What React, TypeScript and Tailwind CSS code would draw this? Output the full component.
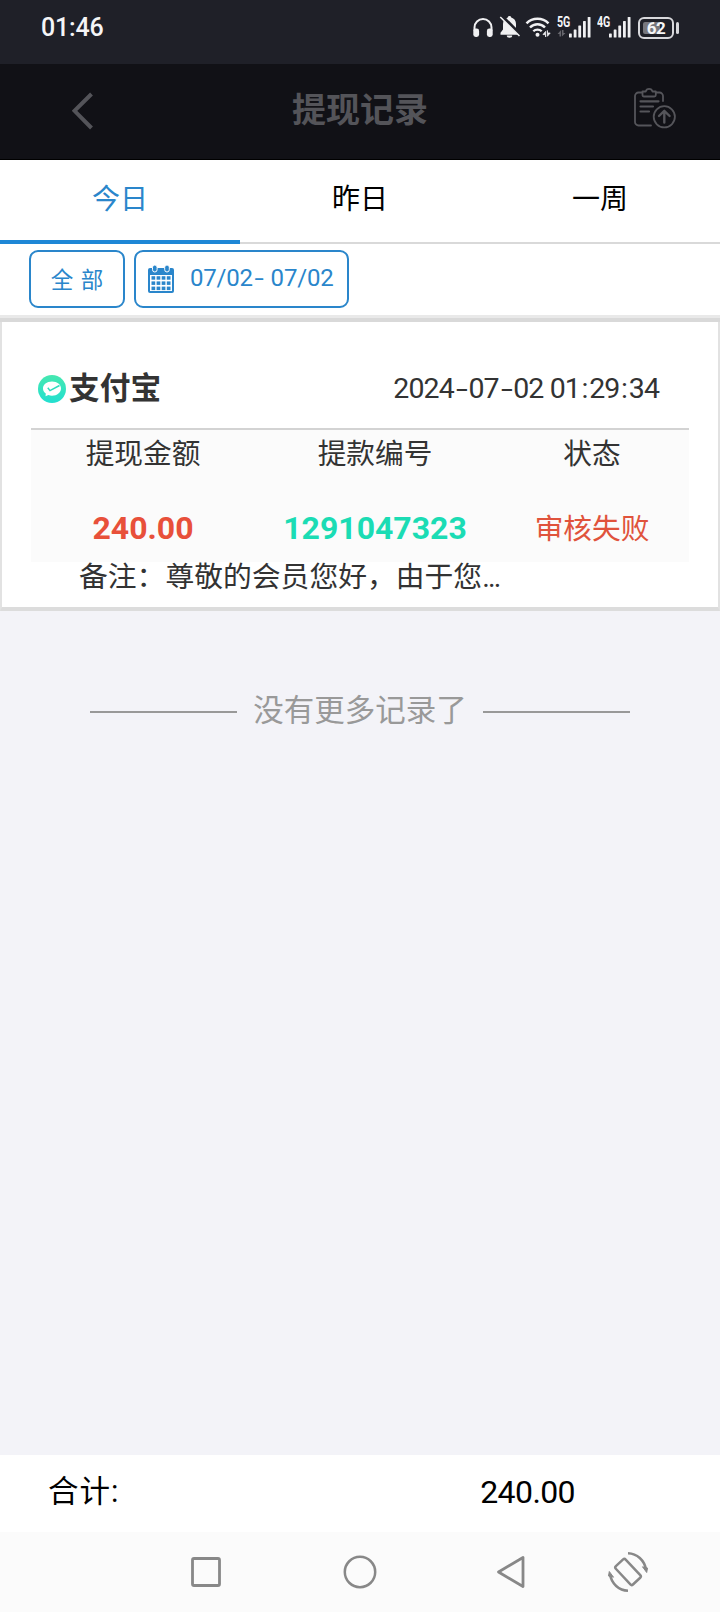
import React from "react";
import { twMerge } from "tailwind-merge";

interface IconProps {
    className?: string;
}

// Signal bars used for both SIM cards
const SignalBars: React.FC<IconProps> = ({ className }) => (
    <svg className={className} width="22" height="21" viewBox="0 0 22 21" fill="#f0f0f2">
        <rect x="0" y="16.5" width="2.8" height="4" rx="0.6" />
        <rect x="4.7" y="12.5" width="2.8" height="8" rx="0.6" />
        <rect x="9.3" y="8.5" width="2.8" height="12" rx="0.6" />
        <rect x="14" y="4" width="2.8" height="16.5" rx="0.6" />
        <rect x="18.7" y="0" width="2.8" height="20.5" rx="0.6" />
    </svg>
);

const StatusBar = () => (
    <div className="flex h-16 items-start justify-between bg-[#1f2028] pl-[41px] pr-[41px] text-[#f5f5f7]">
        <span className="mt-3 text-[25px] leading-8 font-medium tracking-[-0.2px]">01:46</span>
        <div className="mt-[17px] flex h-[23px] items-start">
            {/* Headphones */}
            <svg width="20" height="22" viewBox="0 0 20 22" fill="none">
                <path d="M1.5 14V10.5a8.5 8.5 0 0 1 17 0V14" stroke="#f0f0f2" strokeWidth="2" />
                <rect x="0.3" y="11.5" width="5.8" height="8.5" rx="2.4" fill="#f0f0f2" />
                <rect x="13.9" y="11.5" width="5.8" height="8.5" rx="2.4" fill="#f0f0f2" />
            </svg>
            {/* Muted bell */}
            <svg className="-mt-px ml-1.5" width="22" height="22" viewBox="0 0 22 22">
                <path d="M10.5 0c1 0 1.7.7 1.7 1.6 3 .8 4.8 3.2 4.8 6.4v5.5l2.2 3.3v2H1.5v-2L4 13.5V8c0-3.2 1.8-5.6 4.8-6.4 0-.9.7-1.6 1.7-1.6z" fill="#f0f0f2" />
                <path d="M7.8 19.5h5.4a2.7 2.2 0 0 1-5.4 0z" fill="#f0f0f2" />
                <path d="M3.2 .5 22 19.500" stroke="#1f2028" strokeWidth="3.5" />
                <path d="M1.3 1 20.5 20" stroke="#f0f0f2" strokeWidth="1.5" />
            </svg>
            {/* Wifi */}
            <svg className="-mt-px ml-1" width="26" height="22" viewBox="0 0 26 22" fill="none">
                <path d="M1.5 7.3a15.5 15.5 0 0 1 22 0" stroke="#f0f0f2" strokeWidth="2.5" />
                <path d="M5 11.5a10.5 10.5 0 0 1 15 0" stroke="#f0f0f2" strokeWidth="2.5" />
                <path d="M8.3 15.3a6 6 0 0 1 8.4 0" stroke="#f0f0f2" strokeWidth="2.3" />
                <circle cx="12.5" cy="18.8" r="2" fill="#f0f0f2" />
                <path d="M20.6 21v-5.6l-2.6 3.2h2.6zM22.4 14.5v5.8l2.8-3.3h-2.8z" fill="#f0f0f2" stroke="#f0f0f2" strokeWidth=".8" />
            </svg>
            {/* SIM 1 */}
            <div className="ml-1.5 flex h-[20px] w-[12px] flex-col justify-between">
                <span className="origin-left scale-x-[0.76] text-[14px] leading-[10px] font-bold">5G</span>
                <svg width="9" height="7" viewBox="0 0 9 8" fill="#66666d">
                    <path d="M4 7.5V0L0 4.5h2.200v3zM5 0v7.5L9 3.5H6.800V0z" />
                </svg>
            </div>
            <SignalBars />
            {/* SIM 2 */}
            <span className="ml-1.5 w-[12px] origin-left scale-x-[0.76] text-[14px] leading-[10px] font-bold">4G</span>
            <SignalBars />
            {/* Battery */}
            <div className="ml-[7px] flex items-center">
                <div className="relative flex h-[22px] w-[36px] items-center justify-center rounded-[6px] border-2 border-[#d8d8dc]">
                    <div className="absolute top-[3px] left-[3px] h-3 w-[17px] rounded-[2px] bg-[#77777d]" />
                    <span className="relative text-[17px] leading-4 font-bold tracking-[-0.5px]">62</span>
                </div>
                <div className="ml-0.5 h-3 w-[3px] rounded-sm bg-[#d8d8dc]" />
            </div>
        </div>
    </div>
);

const Header = () => (
    <div className="grid h-24 grid-cols-[1fr_auto_1fr] items-start border-b border-black bg-[#111116] pr-[44px] pl-[72px]">
        <svg className="mt-7" width="22" height="38" viewBox="0 0 22 38" fill="none">
            <path d="M19.5 2 2.5 18.8 19.5 36" stroke="#545459" strokeWidth="4" />
        </svg>
        <h1 className="mt-[21px] mr-7 text-[34px] leading-[50px] font-bold text-[#545459]">提现记录</h1>
        {/* Export records */}
        <svg className="mt-[21px] justify-self-end" width="42" height="44" viewBox="0 0 42 44" fill="none" stroke="#55555a" strokeWidth="1.8" strokeLinecap="round" strokeLinejoin="round">
            <path d="M8 7.5H4.5A3.5 3.5 0 0 0 1 11v26a3.5 3.5 0 0 0 3.5 3.5H17M22 7.5h3.5A3.5 3.5 0 0 1 29 11v5" />
            <path d="M8.5 10V6.5h3.2a3.5 3.5 0 0 1 6.8 0h3.3V10q0 1.5-1.5 1.5H10Q8.5 11.5 8.5 10z" />
            <path d="M6.5 16.3h18M6.5 21.5h12.5M6.5 26.5h8.5" strokeWidth="2.2" />
            <circle cx="30.3" cy="31.8" r="10.6" />
            <path d="M30.3 37.5V27M25 31l5.3-5.2 5.3 5.2" strokeWidth="2.4" />
        </svg>
    </div>
);

const tabs = ["今日", "昨日", "一周"];

const Tabs = () => (
    <div className="flex h-[84px] bg-white">
        {tabs.map((tab, index) => (
            <button
                key={tab}
                className={twMerge(
                    "h-full flex-1 border-b-2 border-[#d9d9d9] pb-0.5 text-[28px] leading-10 text-black",
                    index === 0 && "border-b-4 border-[#1e87d6] pb-0 text-[#2a86cb]"
                )}
            >
                {tab}
            </button>
        ))}
    </div>
);

const CalendarIcon = () => (
    <svg width="26" height="28" viewBox="0 0 26 28">
        <path d="M0 5a2 2 0 0 1 2-2h22a2 2 0 0 1 2 2v21a2 2 0 0 1-2 2H2a2 2 0 0 1-2-2z" fill="#2a86cb" />
        <path d="M2 10h22v16H2z" fill="#fff" />
        <g fill="#2a86cb">
            {[11.2, 16.4, 21.6].map((y) =>
                [3.5, 8.6, 13.7, 18.8].map((x) => <rect key={`${x}-${y}`} x={x} y={y} width="3.7" height="3.5" />)
            )}
        </g>
        <rect x="4.5" y="0" width="4.6" height="7" rx="2.3" fill="#2a86cb" stroke="#fff" strokeWidth="1" />
        <rect x="16.7" y="0" width="4.6" height="7" rx="2.3" fill="#2a86cb" stroke="#fff" strokeWidth="1" />
    </svg>
);

const Filters = () => (
    <div className="flex h-[71px] gap-[9px] bg-white pt-1.5 pl-[29px] text-[#2a86cb]">
        <button className="h-[58px] w-24 rounded-[9px] border-2 border-[#2a86cb] pt-px text-[22.5px] leading-8 [word-spacing:2px]">
            全 部
        </button>
        <button className="flex h-[58px] w-[215px] items-center rounded-[9px] border-2 border-[#2a86cb] pl-3">
            <CalendarIcon />
            <span className="ml-4 pb-0.5 text-[24px] leading-8 tracking-[-0.2px] whitespace-nowrap">
                07/02<span className="inline-block w-3 scale-x-140 text-center">-</span> 07/02
            </span>
        </button>
    </div>
);

// Date text with wide dashes and colons
const DateTime = ({ value }: { value: string }) => (
    <span className="text-[28.5px] leading-10 tracking-[-0.9px] whitespace-nowrap">
        {value.split("").map((char, index) => {
            if (char === "-") {
                return <span key={index} className="inline-block w-[14.6px] scale-x-150 text-center">-</span>;
            }
            if (char === ":") {
                return <span key={index} className="inline-block w-[9.3px] text-center">:</span>;
            }
            return char;
        })}
    </span>
);

const RecordCard = () => (
    <div className="h-[289px] border-x-2 border-b-4 border-x-[#e2e2e2] border-b-[#dcdcdc] bg-white">
        <div className="mx-[29px] flex h-[108px] items-center justify-between border-b-2 border-[#d3d3d3] pt-[27px] pr-[30px] pl-[7px] text-[#333]">
            <div className="flex items-center">
                <svg width="28" height="28" viewBox="0 0 28 28">
                    <defs>
                        <linearGradient id="pay" x1="0" y1="0" x2="0" y2="1">
                            <stop offset="0" stopColor="#46e8b0" />
                            <stop offset="1" stopColor="#22dfd0" />
                        </linearGradient>
                    </defs>
                    <circle cx="14" cy="14" r="14" fill="url(#pay)" />
                    <path d="M14 6.5c5.2 0 9 3 9 7s-3.8 7.2-9 7.2c-1.3 0-2.5-.2-3.6-.6L7.5 21.3l.3-2.8C6 17.300 5 15.5 5 13.5c0-4 3.8-7 9-7z" fill="#fff" />
                    <path d="M9.8 12.8l2.2 2.8L21.5 10.5" fill="none" stroke="#2fdcbc" strokeWidth="1.5" />
                </svg>
                <span className="ml-[3px] text-[30.7px] leading-10 font-bold">支付宝</span>
            </div>
            <DateTime value="2024-07-02 01:29:34" />
        </div>
        <div className="mx-[29px] grid h-[132px] grid-cols-[224px_240px_194px] grid-rows-[76px_56px] bg-[#fbfbfb] text-center text-[28.7px] leading-10 text-[#333]">
            <span className="mt-1">提现金额</span>
            <span className="mt-1">提款编号</span>
            <span className="mt-1">状态</span>
            <span className="mt-0.5 text-[32px] font-bold text-[#e8503a]">240.00</span>
            <span className="mt-0.5 text-[32px] font-bold text-[#1bdcb4]">1291047323</span>
            <span className="mt-[3px] text-[#e0533c]">审核失败</span>
        </div>
        <p className="pl-[77px] text-[28.8px] leading-[30px] text-[#333]">
            备注：尊敬的会员您好，由于您<span className="tracking-[-1.8px]">...</span>
        </p>
    </div>
);

const Footer = () => (
    <div className="flex h-[77px] items-center justify-between bg-white pr-[145px] pl-12 text-black">
        <span className="pb-1 text-[30.5px] leading-10 tracking-[1px]">合计:</span>
        <span className="pb-1 text-[32px] leading-10 tracking-[-0.6px]">240.00</span>
    </div>
);

// Android navigation keys
const NavBar = () => (
    <div className="flex h-20 items-center bg-[#fbfbfb] pl-[190px]">
        <svg width="32" height="32" viewBox="0 0 32 32" fill="none">
            <rect x="2.5" y="2.5" width="27" height="27" rx="1.5" stroke="#888" strokeWidth="2.8" />
        </svg>
        <svg className="ml-[121px]" width="34" height="34" viewBox="0 0 34 34" fill="none">
            <circle cx="17" cy="17" r="15.2" stroke="#888" strokeWidth="2.5" />
        </svg>
        <svg className="ml-[119px]" width="30" height="34" viewBox="0 0 30 34" fill="none">
            <path d="M27 2.5v29L2.5 17z" stroke="#888" strokeWidth="2.8" strokeLinejoin="round" />
        </svg>
        <svg className="ml-[81px]" width="42" height="42" viewBox="0 0 42 42" fill="none" stroke="#888" strokeWidth="2.5" strokeLinejoin="round">
            <rect x="14.3" y="8.5" width="13.5" height="25" rx="1.8" transform="rotate(-43 21 21)" />
            <path d="M21 2.2c9 .3 16.5 7 18 16.5M21 39.8c-9-.3-16.5-7-18-16.5" />
            <path d="M35.5 15.800l5 1.2-.8 4.5zM6.5 26.2l-5-1.2.8-4.5z" fill="#888" strokeWidth="1" />
        </svg>
    </div>
);

const App: React.FC = () => {
    return (
        <div className="flex h-[1612px] w-[720px] flex-col bg-[#f3f3f8] font-[Roboto,'Noto_Sans_CJK_SC',sans-serif]">
            <StatusBar />
            <Header />
            <Tabs />
            <Filters />
            <div className="h-[7px] border-t-3 border-[#e9e9e9] bg-[#d9d9d9]" />
            <RecordCard />
            {/* End of list */}
            <div className="mt-[76px] flex h-[46px] items-center px-[90px] text-[#999]">
                <div className="mt-1 h-0.5 w-[147px] bg-[#999]" />
                <span className="flex-1 pt-px text-center text-[30.5px] leading-10 whitespace-nowrap">没有更多记录了</span>
                <div className="mt-1 h-0.5 w-[147px] bg-[#999]" />
            </div>
            <div className="flex-1" />
            <Footer />
            <NavBar />
        </div>
    );
};

export default App;
